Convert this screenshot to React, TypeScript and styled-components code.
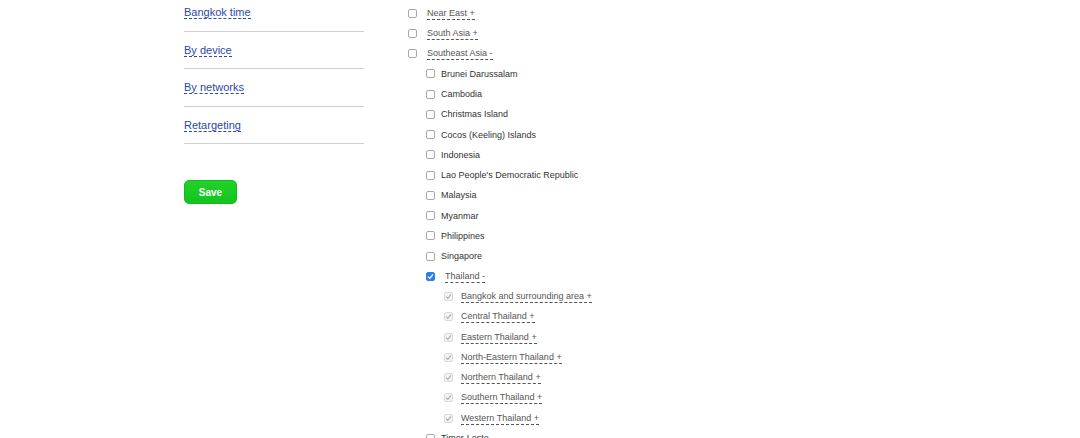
import styled, { createGlobalStyle } from 'styled-components';

const GlobalStyle = createGlobalStyle`
  html, body {
    margin: 0;
    padding: 0;
    background: #fff;
    font-family: "Liberation Sans", Arial, Helvetica, sans-serif;
  }
`;

const Page = styled.div`
  display: flex;
  align-items: flex-start;
  padding-left: 184px;
  height: 438px;
  overflow: hidden;
`;

const Sidebar = styled.aside`
  width: 180px;
  display: flex;
  flex-direction: column;
`;

const SideItem = styled.div`
  height: 14px;
  padding: 10px 0 12.5px;
  border-bottom: 1px solid #cfcfcf;
  line-height: 14px;
  &:first-child {
    padding-top: 4px;
  }
`;

const SideLink = styled.a`
  font-size: 11px;
  color: #2a48a6;
  text-decoration: none;
  border-bottom: 1px dashed #2a48a6;
  cursor: pointer;
`;

const SaveButton = styled.button`
  margin-top: 36px;
  width: 53px;
  height: 24px;
  border: 1px solid #14b81f;
  border-radius: 5px;
  background: linear-gradient(#22d22a, #13c41d);
  color: #fff;
  font-family: "Liberation Sans", Arial, sans-serif;
  font-weight: bold;
  font-size: 10px;
  padding: 0;
`;

const Tree = styled.ul`
  list-style: none;
  margin: 0;
  padding: 3px 0 0 0;
  margin-left: 44px;
`;

const Row = styled.li<{ $level: number }>`
  display: flex;
  align-items: center;
  height: 20.25px;
  padding-left: ${(p) => p.$level * 18}px;
`;

const Box = styled.span<{ $state: 'off' | 'on' | 'locked' }>`
  width: 9px;
  height: 9px;
  box-sizing: border-box;
  border-radius: 2px;
  flex-shrink: 0;
  display: flex;
  align-items: center;
  justify-content: center;
  border: 1px solid
    ${(p) => (p.$state === 'on' ? '#2f7ef0' : p.$state === 'locked' ? '#dadada' : '#a9a9a9')};
  background: ${(p) => (p.$state === 'on' ? '#2f7ef0' : p.$state === 'locked' ? '#f4f4f4' : '#fff')};
`;

const Label = styled.span<{ $link?: boolean; $gap: number }>`
  font-size: 9px;
  line-height: 12px;
  margin-left: ${(p) => p.$gap}px;
  color: ${(p) => (p.$link ? '#555' : '#333')};
  border-bottom: ${(p) => (p.$link ? '1px dashed #555' : 'none')};
  white-space: nowrap;
`;

type Node = { name: string; level: number; state: 'off' | 'on' | 'locked'; link?: boolean };

const nodes: Node[] = [
  { name: 'Near East +', level: 0, state: 'off', link: true },
  { name: 'South Asia +', level: 0, state: 'off', link: true },
  { name: 'Southeast Asia -', level: 0, state: 'off', link: true },
  { name: 'Brunei Darussalam', level: 1, state: 'off' },
  { name: 'Cambodia', level: 1, state: 'off' },
  { name: 'Christmas Island', level: 1, state: 'off' },
  { name: 'Cocos (Keeling) Islands', level: 1, state: 'off' },
  { name: 'Indonesia', level: 1, state: 'off' },
  { name: "Lao People's Democratic Republic", level: 1, state: 'off' },
  { name: 'Malaysia', level: 1, state: 'off' },
  { name: 'Myanmar', level: 1, state: 'off' },
  { name: 'Philippines', level: 1, state: 'off' },
  { name: 'Singapore', level: 1, state: 'off' },
  { name: 'Thailand -', level: 1, state: 'on', link: true },
  { name: 'Bangkok and surrounding area +', level: 2, state: 'locked', link: true },
  { name: 'Central Thailand +', level: 2, state: 'locked', link: true },
  { name: 'Eastern Thailand +', level: 2, state: 'locked', link: true },
  { name: 'North-Eastern Thailand +', level: 2, state: 'locked', link: true },
  { name: 'Northern Thailand +', level: 2, state: 'locked', link: true },
  { name: 'Southern Thailand +', level: 2, state: 'locked', link: true },
  { name: 'Western Thailand +', level: 2, state: 'locked', link: true },
  { name: 'Timor-Leste', level: 1, state: 'off' },
];

const gapFor = (n: Node) => (n.level === 2 ? 8 : n.link ? 10 : 6);

const Check = ({ color }: { color: string }) => (
  <svg width="7" height="7" viewBox="0 0 7 7">
    <path d="M1 3.6 L2.8 5.3 L6 1.4" fill="none" stroke={color} strokeWidth="1.2" />
  </svg>
);

export default function App() {
  return (
    <>
      <GlobalStyle />
      <Page>
        <Sidebar>
          {['Bangkok time', 'By device', 'By networks', 'Retargeting'].map((t) => (
            <SideItem key={t}>
              <SideLink>{t}</SideLink>
            </SideItem>
          ))}
          <div>
            <SaveButton>Save</SaveButton>
          </div>
        </Sidebar>
        <Tree>
          {nodes.map((n) => (
            <Row key={n.name} $level={n.level}>
              <Box $state={n.state}>
                {n.state === 'on' && <Check color="#fff" />}
                {n.state === 'locked' && <Check color="#b0b0b0" />}
              </Box>
              <Label $link={n.link} $gap={gapFor(n)}>
                {n.name}
              </Label>
            </Row>
          ))}
        </Tree>
      </Page>
    </>
  );
}
